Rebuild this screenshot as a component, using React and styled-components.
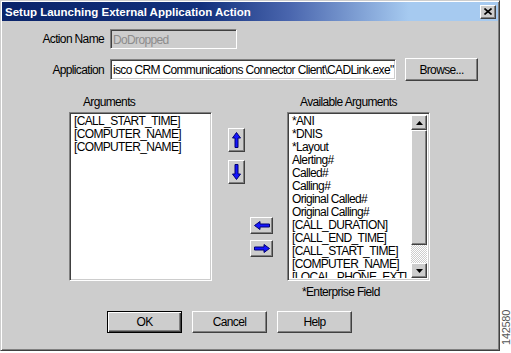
import React from 'react';
import styled, { createGlobalStyle, css } from 'styled-components';

const UI = '"Liberation Sans", Arial, sans-serif';
const FACE = '#cdcdcd';

const Global = createGlobalStyle`
  html, body { margin: 0; padding: 0; background: #fff; }
  body { font-family: ${UI}; }
  #root { width: 511px; height: 353px; display: flex; align-items: flex-start; }
`;

const uiText = css`
  font-family: ${UI};
  font-size: 12px;
  letter-spacing: -0.65px;
  color: #000;
  white-space: nowrap;
`;

const raised = css`
  box-sizing: border-box;
  background: ${FACE};
  border: 1px solid;
  border-color: #fff #404040 #404040 #fff;
  box-shadow: inset -1px -1px #808080, inset 1px 1px ${FACE};
`;

const sunken = css`
  box-sizing: border-box;
  border: 1px solid;
  border-color: #808080 #fff #fff #808080;
  box-shadow: inset 1px 1px #404040, inset -1px -1px ${FACE};
`;

const Dialog = styled.div`
  box-sizing: border-box;
  width: 500px;
  height: 351px;
  background: ${FACE};
  border: 1px solid;
  border-color: ${FACE} #404040 #404040 ${FACE};
  box-shadow: inset 1px 1px #fff, inset -1px -1px #808080;
  padding: 1px;
  display: flex;
  flex-direction: column;
`;

const TitleBar = styled.div`
  height: 19px;
  display: flex;
  align-items: center;
  justify-content: space-between;
  padding: 0 2px 0 3px;
  background: linear-gradient(to right, #0a246a 0%, #12307c 40%, #4a66ae 58%, #a6caf0 82%, #a6caf0 100%);
`;

const Title = styled.span`
  font-family: "Liberation Sans", Arial, sans-serif;
  font-weight: bold;
  font-size: 11.5px;
  color: #fff;
  white-space: nowrap;
`;

const CloseBtn = styled.div`
  ${raised};
  width: 16px;
  height: 14px;
  display: flex;
  align-items: center;
  justify-content: center;
`;

const Body = styled.div`
  display: flex;
  flex-direction: column;
`;

const FieldRow = styled.div`
  display: flex;
  align-items: center;
  margin-top: ${(p) => p.$top}px;
`;

const FieldLabel = styled.div`
  ${uiText};
  width: 102px;
  margin-right: 6px;
  text-align: right;
`;

const TextBox = styled.div`
  ${sunken};
  ${uiText};
  width: ${(p) => p.$w}px;
  height: ${(p) => p.$h}px;
  background: ${(p) => (p.$disabled ? FACE : '#fff')};
  color: ${(p) => (p.$disabled ? '#8c8c8c' : '#000')};
  line-height: ${(p) => p.$h - 4}px;
  padding: 2px 2px;
  overflow: hidden;
`;

const PushButton = styled.div`
  ${raised};
  ${uiText};
  width: ${(p) => p.$w}px;
  height: ${(p) => p.$h}px;
  margin-left: ${(p) => p.$ml || 0}px;
  display: flex;
  align-items: center;
  justify-content: center;
  ${(p) =>
    p.$default &&
    css`
      border: 1px solid #000;
      box-shadow: inset 1px 1px #fff, inset -1px -1px #404040, inset -2px -2px #808080;
    `}
`;

const ListsArea = styled.div`
  display: flex;
  align-items: flex-start;
  margin-top: 15px;
  margin-left: 67px;
`;

const Column = styled.div`
  width: 143px;
  display: flex;
  flex-direction: column;
`;

const ColLabel = styled.div`
  ${uiText};
  height: 16px;
  line-height: 13px;
  padding-left: ${(p) => p.$indent}px;
`;

const ListBox = styled.div`
  ${sunken};
  height: 169px;
  background: #fff;
  padding: 2px;
  display: flex;
  overflow: hidden;
`;

const Items = styled.div`
  flex: 1;
  overflow: hidden;
  padding-left: ${(p) => p.$pl}px;
`;

const Item = styled.div`
  ${uiText};
  height: 13px;
  line-height: 13px;
`;

const ScrollBar = styled.div`
  width: 16px;
  flex: none;
  display: flex;
  flex-direction: column;
`;

const ScrollBtn = styled.div`
  ${raised};
  height: 15px;
  display: flex;
  align-items: center;
  justify-content: center;
`;

const Thumb = styled.div`
  ${raised};
  height: 115px;
`;

const Track = styled.div`
  flex: 1;
  background-color: #fff;
  background-image: repeating-conic-gradient(${FACE} 0 25%, #fff 0 50%);
  background-size: 2px 2px;
`;

const Middle = styled.div`
  width: 75px;
  padding-top: 32px;
  display: flex;
  flex-direction: column;
  align-items: flex-start;
`;

const IconBtn = styled.div`
  ${raised};
  width: ${(p) => p.$w}px;
  height: ${(p) => p.$h}px;
  margin-left: ${(p) => p.$ml}px;
  margin-top: ${(p) => p.$mt || 0}px;
  display: flex;
  align-items: center;
  justify-content: center;
`;

const Note = styled.div`
  ${uiText};
  margin-top: 5px;
  padding-left: 15px;
  height: 13px;
  line-height: 13px;
`;

const ButtonRow = styled.div`
  display: flex;
  gap: 10px;
  margin-top: 12px;
  margin-left: 105px;
`;

const SideStrip = styled.div`
  flex: 1;
  height: 351px;
  display: flex;
  align-items: flex-end;
  justify-content: center;
  padding-bottom: 6px;
  box-sizing: border-box;
`;

const FigNum = styled.div`
  writing-mode: vertical-rl;
  transform: rotate(180deg);
  font-family: ${UI};
  font-size: 11px;
  letter-spacing: -0.3px;
  color: #555;
  line-height: 10px;
`;

const ARROW_FILL = '#1414ff';
const ARROW_STROKE = '#000070';

const UpArrow = () => (
  <svg width="9" height="16" viewBox="0 0 9 16">
    <polygon points="4.5,0.5 8.5,6 6,6 6,15.5 3,15.5 3,6 0.5,6" fill={ARROW_FILL} stroke={ARROW_STROKE} strokeWidth="1" />
  </svg>
);
const DownArrow = () => (
  <svg width="9" height="16" viewBox="0 0 9 16">
    <polygon points="4.5,15.5 8.5,10 6,10 6,0.5 3,0.5 3,10 0.5,10" fill={ARROW_FILL} stroke={ARROW_STROKE} strokeWidth="1" />
  </svg>
);
const LeftArrow = () => (
  <svg width="16" height="9" viewBox="0 0 16 9">
    <polygon points="0.5,4.5 6,0.5 6,3 15.5,3 15.5,6 6,6 6,8.5" fill={ARROW_FILL} stroke={ARROW_STROKE} strokeWidth="1" />
  </svg>
);
const RightArrow = () => (
  <svg width="16" height="9" viewBox="0 0 16 9">
    <polygon points="15.5,4.5 10,0.5 10,3 0.5,3 0.5,6 10,6 10,8.5" fill={ARROW_FILL} stroke={ARROW_STROKE} strokeWidth="1" />
  </svg>
);
const TriUp = () => (
  <svg width="7" height="4" viewBox="0 0 7 4">
    <polygon points="0,4 3.5,0 7,4" fill="#000" />
  </svg>
);
const TriDown = () => (
  <svg width="7" height="4" viewBox="0 0 7 4">
    <polygon points="0,0 3.5,4 7,0" fill="#000" />
  </svg>
);
const CloseX = () => (
  <svg width="8" height="7" viewBox="0 0 8 7">
    <path d="M0.5 0.5 L7.5 6.5 M7.5 0.5 L0.5 6.5" stroke="#000" strokeWidth="1.6" />
  </svg>
);

const argumentsList = ['[CALL_START_TIME]', '[COMPUTER_NAME]', '[COMPUTER_NAME]'];
const availableList = [
  '*ANI',
  '*DNIS',
  '*Layout',
  'Alerting#',
  'Called#',
  'Calling#',
  'Original Called#',
  'Original Calling#',
  '[CALL_DURATION]',
  '[CALL_END_TIME]',
  '[CALL_START_TIME]',
  '[COMPUTER_NAME]',
  '[LOCAL_PHONE_EXT]',
];

export default function App() {
  return (
    <>
      <Global />
      <Dialog>
        <TitleBar>
          <Title>Setup Launching External Application Action</Title>
          <CloseBtn>
            <CloseX />
          </CloseBtn>
        </TitleBar>
        <Body>
          <FieldRow $top={8}>
            <FieldLabel>Action Name</FieldLabel>
            <TextBox $w={127} $h={20} $disabled>
              DoDropped
            </TextBox>
          </FieldRow>
          <FieldRow $top={9}>
            <FieldLabel>Application</FieldLabel>
            <TextBox $w={286} $h={21}>
              isco CRM Communications Connector Client\CADLink.exe"
            </TextBox>
            <PushButton $w={73} $h={23} $ml={9}>
              Browse...
            </PushButton>
          </FieldRow>

          <ListsArea>
            <Column>
              <ColLabel $indent={14}>Arguments</ColLabel>
              <ListBox>
                <Items $pl={2}>
                  {argumentsList.map((a, i) => (
                    <Item key={i}>{a}</Item>
                  ))}
                </Items>
              </ListBox>
            </Column>

            <Middle>
              <IconBtn $w={17} $h={24} $ml={16}>
                <UpArrow />
              </IconBtn>
              <IconBtn $w={17} $h={24} $ml={16} $mt={8}>
                <DownArrow />
              </IconBtn>
              <IconBtn $w={23} $h={17} $ml={38} $mt={33}>
                <LeftArrow />
              </IconBtn>
              <IconBtn $w={23} $h={17} $ml={38} $mt={6}>
                <RightArrow />
              </IconBtn>
            </Middle>

            <Column>
              <ColLabel $indent={13}>Available Arguments</ColLabel>
              <ListBox>
                <Items $pl={2}>
                  {availableList.map((a, i) => (
                    <Item key={i}>{a}</Item>
                  ))}
                </Items>
                <ScrollBar>
                  <ScrollBtn>
                    <TriUp />
                  </ScrollBtn>
                  <Thumb />
                  <Track />
                  <ScrollBtn>
                    <TriDown />
                  </ScrollBtn>
                </ScrollBar>
              </ListBox>
              <Note>*Enterprise Field</Note>
            </Column>
          </ListsArea>

          <ButtonRow>
            <PushButton $w={75} $h={22} $default>
              OK
            </PushButton>
            <PushButton $w={75} $h={22}>
              Cancel
            </PushButton>
            <PushButton $w={75} $h={22}>
              Help
            </PushButton>
          </ButtonRow>
        </Body>
      </Dialog>
      <SideStrip>
        <FigNum>142580</FigNum>
      </SideStrip>
    </>
  );
}
